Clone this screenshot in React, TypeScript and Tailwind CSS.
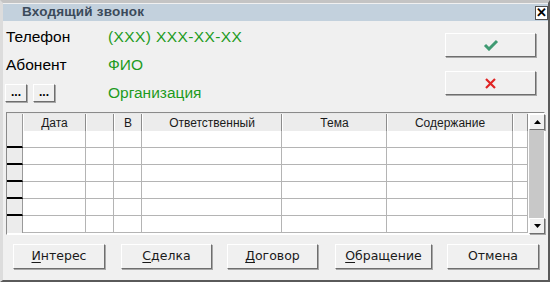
import React from "react";

const cols = [
  { w: "w-[63px]", label: "Дата" },
  { w: "w-[28px]", label: "" },
  { w: "w-[28px]", label: "В" },
  { w: "w-[140px]", label: "Ответственный" },
  { w: "w-[105px]", label: "Тема" },
  { w: "w-[126px]", label: "Содержание" },
  { w: "w-[15px]", label: "" },
];

const rows = [0, 1, 2, 3, 4, 5];

function Raised({ className, children }: { className?: string; children?: React.ReactNode }) {
  return (
    <div
      className={
        "flex items-center justify-center bg-[#f0f0f0] border border-t-white border-l-white border-r-[#6e6e6e] border-b-[#6e6e6e] shadow-[1px_1px_0_#a8a8a8] " +
        (className ?? "")
      }
    >
      {children}
    </div>
  );
}

function BottomButton({ w, first, rest }: { w: string; first?: string; rest: string }) {
  return (
    <Raised className={w + " h-[25px] text-[12.5px] text-[#1a1a1a] font-['DejaVu_Sans',sans-serif]"}>
      {first && <span className="underline underline-offset-2">{first}</span>}
      <span>{rest}</span>
    </Raised>
  );
}

export default function App() {
  return (
    <div className="w-[558px] h-[283px] bg-white font-['Liberation_Sans',Arial,sans-serif]">
      <div className="w-[550px] h-[282px] bg-[#f0f0f0] border-t-[3px] border-l-[3px] border-t-[#c4c4c4] border-l-[#dcdcdc] border-r-2 border-b-2 border-r-[#5a5a5a] border-b-[#5a5a5a] flex flex-col">
        {/* title bar */}
        <div className="h-[17px] mt-[1px] bg-[#c3d1dd] flex items-center justify-between pl-[19px] pr-0">
          <span className="text-[13.5px] font-bold text-[#3b4a5a] tracking-[0.2px]">Входящий звонок</span>
          <div className="w-[13px] h-[14px] bg-white border border-[#505050] flex items-center justify-center text-[13px] leading-none font-bold text-black">
            ✕
          </div>
        </div>

        {/* top area */}
        <div className="flex mt-[2px] h-[89px]">
          <div className="flex flex-col w-[442px]">
            <div className="h-[28px] flex items-center">
              <span className="w-[105px] pl-[3px] text-[15.5px] text-black">Телефон</span>
              <span className="text-[15.5px] tracking-[0.4px] text-[#1d9b1d]">(XXX) XXX-XX-XX</span>
            </div>
            <div className="h-[28px] flex items-center">
              <span className="w-[105px] pl-[3px] text-[15.5px] text-black">Абонент</span>
              <span className="text-[15.5px] text-[#1d9b1d]">ФИО</span>
            </div>
            <div className="h-[28px] flex items-center">
              <div className="w-[105px] flex gap-[6px] pl-[2px]">
                <Raised className="w-[22px] h-[18px] text-[12px] font-bold leading-none pb-[3px]">...</Raised>
                <Raised className="w-[22px] h-[18px] text-[12px] font-bold leading-none pb-[3px]">...</Raised>
              </div>
              <span className="text-[15.5px] text-[#1d9b1d]">Организация</span>
            </div>
          </div>
          <div className="flex flex-col gap-[14px] pt-[10px]">
            <Raised className="w-[91px] h-[24px]">
              <svg width="16" height="12" viewBox="0 0 16 12">
                <path d="M2 6 L6 10 L14 2" fill="none" stroke="#3f9a72" strokeWidth="3" />
              </svg>
            </Raised>
            <Raised className="w-[91px] h-[24px]">
              <svg width="13" height="13" viewBox="0 0 13 13">
                <path d="M2 2 L11 11 M11 2 L2 11" stroke="#e02424" strokeWidth="2.2" />
              </svg>
            </Raised>
          </div>
        </div>

        {/* grid */}
        <div className="ml-[3px] w-[539px] h-[123px] flex border border-t-[#8a8a8a] border-l-[#8a8a8a] border-r-white border-b-white bg-white">
          <div className="flex flex-col">
            <div className="flex h-[18px] border-t border-[#e8e8e8]">
              <div className="w-[16px] bg-[#ececec] border-r border-[#9a9a9a]" />
              {cols.map((c, i) => (
                <div
                  key={i}
                  className={
                    c.w +
                    " bg-[#ececec] border-l border-white border-r border-r-[#8c8c8c] flex items-center justify-center text-[12px] text-[#1a1a1a] leading-none"
                  }
                >
                  {c.label}
                </div>
              ))}
            </div>
            {rows.map((r) => (
              <div key={r} className="flex h-[17px]">
                <div
                  className={
                    "w-[16px] bg-[#ececec] border-r border-[#9a9a9a] " +
                    (r < 5 ? "border-b-2 border-b-black" : "")
                  }
                />
                {cols.map((c, i) => (
                  <div key={i} className={c.w + " border-r border-b border-[#b4b4b4]"} />
                ))}
              </div>
            ))}
          </div>
          <div className="w-[16px] flex flex-col pt-[1px] pl-[1px]">
            <Raised className="w-[16px] h-[16px]">
              <svg width="7" height="4" viewBox="0 0 7 4">
                <path d="M0 4 L3.5 0 L7 4 Z" fill="black" />
              </svg>
            </Raised>
            <div className="flex-1 bg-[#c8c8c8]" />
            <Raised className="w-[16px] h-[16px]">
              <svg width="7" height="4" viewBox="0 0 7 4">
                <path d="M0 0 L3.5 4 L7 0 Z" fill="black" />
              </svg>
            </Raised>
          </div>
        </div>

        {/* bottom buttons */}
        <div className="flex mt-[9px] pl-[10px]">
          <BottomButton w="w-[92px]" first="И" rest="нтерес" />
          <div className="w-[16px]" />
          <BottomButton w="w-[91px]" first="С" rest="делка" />
          <div className="w-[15px]" />
          <BottomButton w="w-[91px]" first="Д" rest="оговор" />
          <div className="w-[17px]" />
          <BottomButton w="w-[97px]" first="О" rest="бращение" />
          <div className="w-[15px]" />
          <BottomButton w="w-[92px]" rest="Отмена" />
        </div>
      </div>
    </div>
  );
}
